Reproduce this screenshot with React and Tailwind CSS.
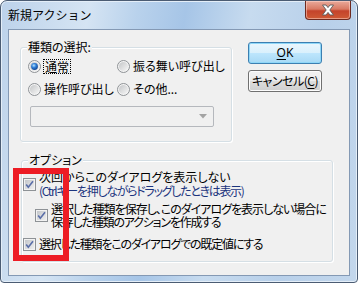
import React from "react";

const JP = "font-['Noto_Sans_CJK_JP','Noto_Sans',sans-serif] [font-feature-settings:'palt']";

function Radio({ checked }) {
  return (
    <svg width="13" height="13" viewBox="0 0 13 13" className="shrink-0">
      <defs>
        <linearGradient id="rg" x1="0" y1="0" x2="1" y2="1">
          <stop offset="0" stopColor="#c4c6c8" />
          <stop offset="1" stopColor="#f6f6f6" />
        </linearGradient>
        <radialGradient id="rd" cx="0.4" cy="0.35" r="0.7">
          <stop offset="0" stopColor="#b9e4ff" />
          <stop offset="0.45" stopColor="#2f7fd8" />
          <stop offset="1" stopColor="#0f3f8a" />
        </radialGradient>
      </defs>
      <circle cx="6.5" cy="6.5" r="6" fill="#f4f4f4" stroke="#8e9296" />
      <circle cx="6.5" cy="6.5" r="4.6" fill="url(#rg)" />
      {checked && <circle cx="6.5" cy="6.5" r="3.4" fill="url(#rd)" />}
    </svg>
  );
}

function Check() {
  return (
    <svg width="13" height="13" viewBox="0 0 13 13" className="shrink-0">
      <defs>
        <linearGradient id="cg" x1="0" y1="0" x2="1" y2="1">
          <stop offset="0" stopColor="#c3c6ca" />
          <stop offset="1" stopColor="#eeeeee" />
        </linearGradient>
      </defs>
      <rect x="0.5" y="0.5" width="12" height="12" fill="#f2f2f2" stroke="#8e9296" />
      <rect x="2" y="2" width="9" height="9" fill="url(#cg)" />
      <path d="M3.2 6.4 L5.3 9.2 L10 3.2" fill="none" stroke="#5a6ea8" strokeWidth="1.6" />
    </svg>
  );
}

function Group({ label, className, children }) {
  return (
    <div className={`relative border border-[#d5dfe5] rounded-[3px] shadow-[inset_1px_1px_0_#ffffff,1px_1px_0_#ffffff] ${className}`}>
      <div className="absolute left-[6px] -top-[8px] bg-[#f0f0f0] px-[1px] text-[12px] leading-[14px] text-black whitespace-nowrap">
        {label}
      </div>
      {children}
    </div>
  );
}

export default function App() {
  return (
    <div className={`relative w-[358px] h-[283px] overflow-hidden rounded-t-[7px] rounded-b-[4px] border border-[#4b5c73] bg-[linear-gradient(100deg,#bcd2ea_0%,#d5e4f3_22%,#b9d2ec_34%,#a6c5e7_46%,#c7dbef_62%,#b8d0ea_80%,#c3d7ec_100%)] shadow-[inset_0_0_0_1px_#e4eef8] ${JP}`}>
      {/* title bar */}
      <div className="h-[28px] flex items-center pl-[7px] text-[12px] text-black [font-feature-settings:normal]">
        新規アクション
      </div>

      {/* close button */}
      <div className="absolute top-0 right-[6px] w-[46px] h-[19px] rounded-b-[4px] border border-t-0 border-[#6e2a20] bg-[linear-gradient(to_bottom,#e9aa9b_0%,#d87a64_45%,#c4432b_55%,#cf5a35_100%)] shadow-[inset_0_0_0_1px_rgba(255,220,210,0.5)] flex items-center justify-center">
        <svg width="16" height="12" viewBox="0 0 16 12">
          <path
            d="M2.5 1 L6 1 L8 3.6 L10 1 L13.5 1 L9.8 6 L13.5 11 L10 11 L8 8.4 L6 11 L2.5 11 L6.2 6 Z"
            fill="#ffffff"
            stroke="#5a5a5a"
            strokeWidth="0.9"
            strokeLinejoin="round"
          />
        </svg>
      </div>

      {/* client area */}
      <div className="mx-[7px] h-[247px] border border-[#8499b4] bg-[#f0f0f0] text-[12px] text-black">
        <div className="flex items-start">
          <Group label="種類の選択:" className="ml-[11px] mt-[17px] w-[212px] h-[95px]">
            <div className="flex flex-col gap-[7px] pt-[10px] pl-[7px] whitespace-nowrap">
              <div className="flex items-center h-[16px]">
                <div className="w-[89px] flex items-center">
                  <Radio checked />
                  <span className="ml-[2px] border border-dotted border-black leading-[13px] px-[1px]">通常</span>
                </div>
                <Radio />
                <span className="ml-[3px] leading-[14px]">振る舞い呼び出し</span>
              </div>
              <div className="flex items-center h-[16px]">
                <div className="w-[89px] flex items-center">
                  <Radio />
                  <span className="ml-[3px] leading-[14px]">操作呼び出し</span>
                </div>
                <Radio />
                <span className="ml-[3px] leading-[14px]">その他...</span>
              </div>
            </div>
            <div className="ml-[9px] mt-[9px] w-[184px] h-[21px] border border-[#b5b8bd] rounded-[2px] bg-[#f0f0f0] flex items-center justify-end pr-[6px]">
              <svg width="8" height="5" viewBox="0 0 8 5">
                <path d="M0 0 L8 0 L4 4.5 Z" fill="#a3a3a3" />
              </svg>
            </div>
          </Group>

          <div className="ml-[16px] mt-[12px] flex flex-col gap-[6px] whitespace-nowrap">
            <div className="w-[74px] h-[22px] rounded-[3px] border border-[#3c7fb1] bg-[linear-gradient(to_bottom,#eaf6fd_0%,#d9f0fc_50%,#bee6fd_50%,#a7d9f5_100%)] shadow-[inset_0_0_0_1px_#8fd7f8] flex items-center justify-center leading-[14px] font-['Noto_Sans',sans-serif]">
              <span><span className="underline underline-offset-2">O</span>K</span>
            </div>
            <div className="w-[74px] h-[22px] rounded-[3px] border border-[#707070] bg-[linear-gradient(to_bottom,#f2f2f2_0%,#ebebeb_50%,#dddddd_50%,#cfcfcf_100%)] shadow-[inset_0_0_0_1px_#fcfcfc] flex items-center justify-center leading-[14px] tracking-[-0.5px]">
              <span>キャンセル(<span className="underline underline-offset-2">C</span>)</span>
            </div>
          </div>
        </div>

        <Group label="オプション" className="ml-[12px] mt-[18px] w-[312px] h-[102px]">
          <div className="pt-[9px] pl-[1px] flex flex-col whitespace-nowrap">
            <div className="flex items-center">
              <Check />
              <div className="ml-[3px] leading-[14px]">
                <div>次回からこのダイアログを表示しない</div>
                <div className="text-[#1c357e] tracking-[-1.3px]">(Ctrlキーを押しながらドラッグしたときは表示)</div>
              </div>
            </div>
            <div className="flex items-center mt-[4px] ml-[12px]">
              <Check />
              <div className="ml-[3px] leading-[13px]">
                <div className="tracking-[-1px]">選択した種類を保存し、このダイアログを表示しない場合に</div>
                <div className="tracking-[-1.2px]">保存した種類のアクションを作成する</div>
              </div>
            </div>
            <div className="flex items-center mt-[9px]">
              <Check />
              <div className="ml-[3px] leading-[14px] tracking-[-1.2px]">選択した種類をこのダイアログでの既定値にする</div>
            </div>
          </div>
        </Group>
      </div>

      {/* red annotation rectangle */}
      <div className="absolute left-[12px] top-[167px] w-[56px] h-[93px] border-[6px] border-[#ed1c24]" />
    </div>
  );
}
